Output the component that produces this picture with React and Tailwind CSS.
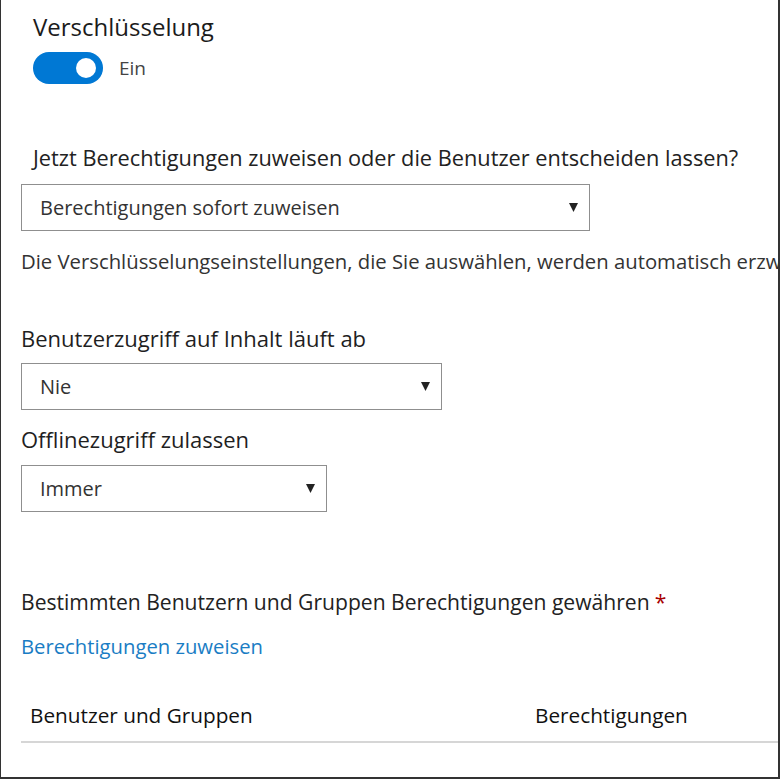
import React from 'react';

function Caret() {
  return (
    <svg width="9" height="9" viewBox="0 0 9 9" className="shrink-0">
      <polygon points="0,0 9,0 4.5,9" fill="#222" />
    </svg>
  );
}

function Select({ value, width }) {
  return (
    <div
      className={`flex h-[47px] items-center justify-between border border-[#8f8f8f] bg-white pl-[18px] pr-[11px] ${width}`}
    >
      <span className="text-[20px] leading-[26px] text-[#333]">{value}</span>
      <Caret />
    </div>
  );
}

export default function App() {
  return (
    <div
      className="h-[779px] w-[781px] overflow-hidden bg-white"
      style={{ fontFamily: '"Open Sans", Lato, sans-serif' }}
    >
      <div className="flex h-[779px] w-[780px] flex-col overflow-hidden border-b-2 border-l border-r-2 border-[#333] pl-[20px]">
        {/* encryption */}
        <div className="pl-[12px] pt-[12px]">
          <h2 className="text-[24px] leading-[30px] text-[#1b1b1b]">Verschlüsselung</h2>
          <div className="mt-[10px] flex items-center gap-[16px]">
            <div className="flex h-[32px] w-[70px] items-center justify-end rounded-full bg-[#0078d4] pr-[7px]">
              <div className="h-[20px] w-[20px] rounded-full bg-white" />
            </div>
            <span className="text-[19px] leading-[24px] text-[#444]">Ein</span>
          </div>
          <p className="mt-[60px] whitespace-nowrap text-[21.75px] leading-[28px] text-[#222]">
            Jetzt Berechtigungen zuweisen oder die Benutzer entscheiden lassen?
          </p>
        </div>

        <div className="mt-[12px]">
          <Select value="Berechtigungen sofort zuweisen" width="w-[569px]" />
        </div>

        {/* runs past the panel edge, as in the original */}
        <p className="mt-[17px] whitespace-nowrap text-[20.3px] leading-[26px] text-[#333]">
          Die Verschlüsselungseinstellungen, die Sie auswählen, werden automatisch erzwungen.
        </p>

        <p className="mt-[50px] text-[22px] leading-[28px] text-[#1f1f1f]">
          Benutzerzugriff auf Inhalt läuft ab
        </p>
        <div className="mt-[11px]">
          <Select value="Nie" width="w-[421px]" />
        </div>

        <p className="mt-[15px] text-[22px] leading-[28px] text-[#1f1f1f]">Offlinezugriff zulassen</p>
        <div className="mt-[12px]">
          <Select value="Immer" width="w-[306px]" />
        </div>

        {/* users and groups */}
        <p className="mt-[76px] whitespace-nowrap text-[21.1px] leading-[28px] text-[#222]">
          Bestimmten Benutzern und Gruppen Berechtigungen gewähren
          <span className="ml-[5px] text-[#a80000]">*</span>
        </p>
        <a className="mt-[17px] self-start text-[20.25px] leading-[26px] text-[#1a7dc4]" href="#">
          Berechtigungen zuweisen
        </a>

        <div className="mt-[43px] flex border-b-2 border-[#d6d6d6] pb-[13px] text-[20.75px] leading-[26px] text-[#111]">
          <span className="w-[514px] pl-[9px]">Benutzer und Gruppen</span>
          <span>Berechtigungen</span>
        </div>
      </div>
    </div>
  );
}
